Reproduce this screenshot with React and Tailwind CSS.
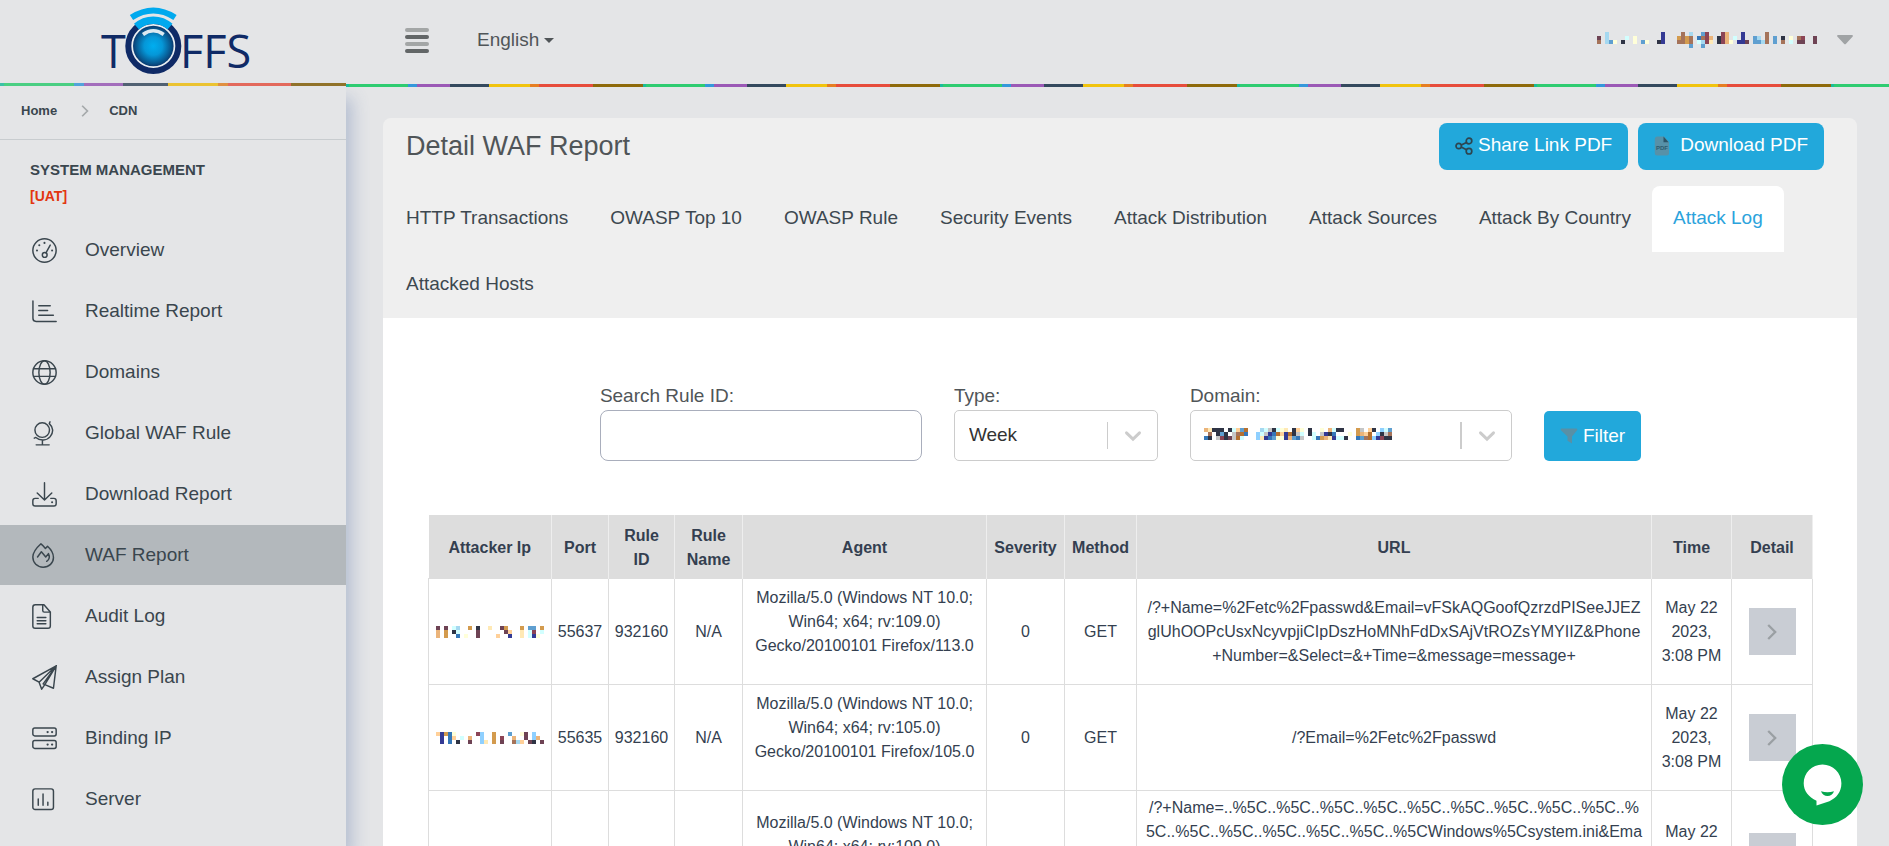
import React from 'react';

const PALETTE = {
  k: '#2f3445',
  n: '#343a94',
  m: '#6e4354',
  r: '#8c4455',
  b: '#a5735a',
  o: '#b5702f',
  t: '#d39b4e',
  p: '#ebb47a',
  s: '#ffd099',
  y: '#ffe9b5',
  w: '#ffffd9',
  c: '#d2ffff',
  l: '#a5d8f0',
  f: '#8fd0ff',
  u: '#5f9fd0',
  e: '#3577b8',
  g: '#c6c6c6',
};

function Mosaic({ rows, label }) {
  const cols = Math.max(...rows.map((row) => row.length));
  return (
    <svg role="img" aria-label={label} width={cols * 4} height={rows.length * 4} shapeRendering="crispEdges" className="block shrink-0">
      {rows.flatMap((row, y) =>
        [...row].map((ch, x) =>
          PALETTE[ch] ? <rect key={`${x}-${y}`} x={x * 4} y={y * 4} width="4" height="4" fill={PALETTE[ch]} /> : null
        )
      )}
    </svg>
  );
}

const USER_ROWS = [
  '  l             n    b l  ur   rp   n     b',
  'm l    c w      n   tbtb ebrp krp c n  ul b u k w br  m',
  'b luw k  w uw  kn   bbtb clry krpw nnm uulb u b c mm  m',
  '                       u  u',
];
const DOMAIN_ROWS = [
  'pykkk kcsuo   lcgkcwy ksw k  w pckk   tg sk fcu',
  ' b kuk gboe  fcgneosnokgc kc gnke   w tpso fkgb',
  'ek grkmgoc   fyneuwwnpueg  cetpyncck  eubofnrkk',
];
const IP_ROWS = [
  ['m m cl  t k  y  mt   t uu t', 'p t kc    m      ms  y cr c', 'p t  e w  m    s  n  y cnw '],
  ['sntew     rf  t   u  wm f', ' n es c p  f  t r  p  m fp', ' n e k  m  fy t m  bls mk m'],
  ['n rw cl t  k  s  mt  t u', 'p t ks  c  m  c  rs y  cr', 'p t  e w   m   s  n  y cn'],
];

function Icon({ children }) {
  return (
    <svg
      viewBox="0 0 24 24"
      className="size-[25px] shrink-0"
      fill="none"
      stroke="currentColor"
      strokeWidth="1.4"
      strokeLinecap="round"
      strokeLinejoin="round"
      aria-hidden="true"
    >
      {children}
    </svg>
  );
}

const GaugeIcon = () => (
  <Icon>
    <circle cx="12" cy="12" r="11.2" />
    <circle cx="12.2" cy="16.3" r="2.3" />
    <path d="M13.4 14.2 17.5 6.8" />
    <g fill="currentColor" stroke="none">
      <circle cx="12" cy="4.7" r="1" />
      <circle cx="7" cy="7" r="1" />
      <circle cx="4.8" cy="12" r="1" />
      <circle cx="19.3" cy="12" r="1" />
    </g>
  </Icon>
);
const ChartIcon = () => (
  <Icon>
    <path d="M.9 2v16.500q0 3 3 3H23.200M6.500 6.500h11M6.500 11h8.500M6.500 15.500h14" />
  </Icon>
);
const GlobeIcon = () => (
  <Icon>
    <circle cx="12" cy="12" r="11.2" />
    <ellipse cx="12" cy="12" rx="5.400" ry="11.2" />
    <path d="M1.500 8.300h21M1.500 15.700h21" />
  </Icon>
);
const StandGlobeIcon = () => (
  <Icon>
    <circle cx="9.800" cy="8.700" r="7" />
    <path d="M17.300.8 16.600 2.500C20.500 6 20.900 11 17.500 15S8 19.500 3.700 15.800L2.200 16.500M10 18.200v4.600M4 22.900h12.500" />
  </Icon>
);
const DownloadIcon = () => (
  <Icon>
    <path d="M12 .8v16M5 10.500l7 6.700 7-6.700M6 15.700H3q-2.200 0-2.200 2.200v3q0 2.200 2.200 2.200h18q2.200 0 2.200-2.200v-3q0-2.200-2.200-2.200h-3" />
    <circle cx="19.300" cy="19.500" r="1" fill="currentColor" stroke="none" />
  </Icon>
);
const FireIcon = () => (
  <Icon>
    <path d="M8.600.8c2 1.500 3.200 3 4.300 4.500l2-2.200c3 2.700 5.700 7 5.700 10.800 0 5.200-4.200 9.300-9.900 9.300S.8 19 .8 13.500C.8 9.500 4.500 4.500 8.600.8Z" />
    <path d="M5.300 13.400 9 8.400l4.200 5 2.600-3.200c1.200 2.500.9 5.700-1.700 7.400" />
  </Icon>
);
const FileIcon = () => (
  <Icon>
    <path d="M3.200.8h8.300l6.100 6.800v13.400q0 2.200-2.200 2.200H3q-2.200 0-2.200-2.200V3Q.8.8 3.200.8ZM10.300.8v5.400q0 1.600 1.600 1.600h5.500M5 13h8.300M5 16h8.300M5 19h8.300" />
  </Icon>
);
const PlaneIcon = () => (
  <Icon>
    <path d="M23.200.8.8 13.200l6 3.300L23.200.8l-2.600 21.500-8.300-3.400L23.200.8 6.800 16.500l2.500 6.700 3-4.300-1.600-.8L23.200.8" />
  </Icon>
);
const ServersIcon = () => (
  <Icon>
    <rect x=".8" y="2" width="22.400" height="7.500" rx="1.800" />
    <rect x=".8" y="14" width="22.400" height="7.500" rx="1.800" />
    <g fill="currentColor" stroke="none">
      <circle cx="15" cy="5.800" r="1.100" />
      <circle cx="19.300" cy="5.800" r="1.100" />
      <circle cx="15" cy="17.800" r="1.100" />
      <circle cx="19.300" cy="17.800" r="1.100" />
    </g>
  </Icon>
);
const BarsIcon = () => (
  <Icon>
    <rect x=".8" y="1.800" width="19.800" height="19.800" rx="2.200" />
    <path d="M6 11.500v6M10.600 6.700v10.800M15.200 14.500v3" />
  </Icon>
);

const NAV = [
  ['Overview', GaugeIcon],
  ['Realtime Report', ChartIcon],
  ['Domains', GlobeIcon],
  ['Global WAF Rule', StandGlobeIcon],
  ['Download Report', DownloadIcon],
  ['WAF Report', FireIcon],
  ['Audit Log', FileIcon],
  ['Assign Plan', PlaneIcon],
  ['Binding IP', ServersIcon],
  ['Server', BarsIcon],
];

const TABS = [
  'HTTP Transactions',
  'OWASP Top 10',
  'OWASP Rule',
  'Security Events',
  'Attack Distribution',
  'Attack Sources',
  'Attack By Country',
  'Attack Log',
  'Attacked Hosts',
];

const ROWS = [
  {
    port: '55637',
    rule: '932160',
    agent: 'Mozilla/5.0 (Windows NT 10.0; Win64; x64; rv:109.0) Gecko/20100101 Firefox/113.0',
    url: [
      '/?+Name=%2Fetc%2Fpasswd&Email=vFSkAQGoofQzrzdPISeeJJEZ',
      'glUhOOPcUsxNcyvpjiCIpDszHoMNhFdDxSAjVtROZsYMYIIZ&Phone',
      '+Number=&Select=&+Time=&message=message+',
    ],
  },
  {
    port: '55635',
    rule: '932160',
    agent: 'Mozilla/5.0 (Windows NT 10.0; Win64; x64; rv:105.0) Gecko/20100101 Firefox/105.0',
    url: ['/?Email=%2Fetc%2Fpasswd'],
  },
  {
    port: '55631',
    rule: '930120',
    agent: 'Mozilla/5.0 (Windows NT 10.0; Win64; x64; rv:109.0) Gecko/20100101 Firefox/113.0',
    url: [
      '/?+Name=..%5C..%5C..%5C..%5C..%5C..%5C..%5C..%5C..%5C..%',
      '5C..%5C..%5C..%5C..%5C..%5C..%5CWindows%5Csystem.ini&Ema',
      'il=vFSkAQGoofQzrzdPISeeJJEZglUhOOPcUsxNcyvpjiCIpDszHo',
      'MNhFdDxSAjVtROZsYMYIIZ&Phone+Number=&Select=&+Time=',
      '&message=message+',
    ],
  },
];

const HEADS = ['Attacker Ip', 'Port', 'Rule ID', 'Rule Name', 'Agent', 'Severity', 'Method', 'URL', 'Time', 'Detail'];

function Logo() {
  return (
    <svg width="160" height="76" viewBox="93 4 160 76" role="img" aria-label="TOFFS" className="block">
      <defs>
        <radialGradient id="orb">
          <stop offset="0" stopColor="#00aef0" />
          <stop offset=".45" stopColor="#0597d8" />
          <stop offset=".85" stopColor="#08578f" />
          <stop offset="1" stopColor="#0a3a70" />
        </radialGradient>
      </defs>
      <g fill="#0f2a66" fontFamily="'Open Sans', 'Noto Sans', sans-serif" fontSize="45" fontWeight="500">
        <text x="101" y="68">
          T
        </text>
        <text x="180" y="68">
          FFS
        </text>
      </g>
      <circle cx="153.300" cy="46" r="25" fill="#e9eef2" stroke="#0f2a66" strokeWidth="6" />
      <path d="M136.500 26.600A25 25 0 0 1 170 26.600" fill="none" stroke="#00a9ee" strokeWidth="7.500" />
      <path d="M131.500 17.500Q153.300 3.500 175 17.500" fill="none" stroke="#00a9ee" strokeWidth="6" />
      <circle cx="153.300" cy="46" r="20.300" fill="url(#orb)" />
      <path d="M143 34.500Q153.300 27 163.700 34.500" fill="none" stroke="#dbe9f1" strokeWidth="3.600" />
    </svg>
  );
}

function Chevron({ className }) {
  return (
    <svg viewBox="0 0 16 16" className={className} fill="none" stroke="currentColor" strokeWidth="2.600" strokeLinecap="round" aria-hidden="true">
      <path d="M2.200 5.200 8 10.800l5.800-5.600" />
    </svg>
  );
}

function ArrowRight({ className }) {
  return (
    <svg viewBox="0 0 10 16" className={className} fill="none" stroke="currentColor" strokeWidth="2.300" aria-hidden="true">
      <path d="m1.200 1 7 7-7 7" />
    </svg>
  );
}

function SelectBox({ id, label, width, children, overlay, bar }) {
  return (
    <div className={width}>
      <label htmlFor={id} className="block h-7 leading-7">
        {label}
      </label>
      <div className="relative">
        <select
          id={id}
          className="block h-[51px] w-full appearance-none rounded-[5px] border border-[#cccccc] bg-white pr-14 pl-[14px] text-[19px] text-[#333333]"
        >
          {children}
        </select>
        {overlay}
        <div className="pointer-events-none absolute inset-y-0 right-4 flex items-center gap-4 text-[#cccccc]">
          <span className={`h-[27px] bg-[#cccccc] ${bar}`} />
          <Chevron className="size-[18px]" />
        </div>
      </div>
    </div>
  );
}

export default function App() {
  return (
    <div className="flex h-screen overflow-hidden bg-[#e4e5e7] font-['Liberation_Sans',Arial,sans-serif] text-[19px] text-[#505558]">
      <aside className="relative z-10 flex w-[346px] shrink-0 flex-col text-[#3a464e]">
        <a href="#home" className="flex h-[83px] shrink-0 justify-center pt-1">
          <Logo />
        </a>
        <div className="h-[3px] shrink-0 bg-[linear-gradient(90deg,#3cc3a8_0_4px,#4bd183_4px_74px,#53a5dd_74px_84px,#a56ebd_84px_123px,#526273_123px_168px,#eec530_168px_218px,#e39140_218px_228px,#e66a5c_228px_291px,#927328_291px_346px)]" />
        <div className="grow bg-[#e4e5e7] shadow-[6px_12px_16px_rgba(69,101,160,0.3)]">
          <nav aria-label="Breadcrumb" className="flex h-[54px] items-center border-b border-[#c8cccf] pb-1 pl-[21px] text-[13px] font-bold">
            <a href="#home">Home</a>
            <ArrowRight className="mr-5 ml-6 h-3 w-2 text-[#a5a9ab]" />
            <a href="#cdn">CDN</a>
          </nav>
          <div className="px-[30px] pt-4 leading-[27px] font-bold">
            <h2 className="text-[15px]">SYSTEM MANAGEMENT</h2>
            <p className="text-[14px] text-[#e2360f]">[UAT]</p>
          </div>
          <ul className="mt-[10px] flex flex-col gap-px">
            {NAV.map(([name, Glyph]) => (
              <li key={name}>
                <a
                  href={`#${name}`}
                  aria-current={name === 'WAF Report' ? 'page' : undefined}
                  className={`flex h-[60px] items-center gap-7 pl-8 ${name === 'WAF Report' ? 'bg-[#b3b8bc]' : ''}`}
                >
                  <Glyph />
                  {name}
                </a>
              </li>
            ))}
          </ul>
        </div>
      </aside>

      <div className="min-w-0 flex-1">
        <header className="relative z-20 bg-[#e4e5e7]">
          <div className="flex h-[84px] items-center pr-9 pb-1 pl-[59px]">
            <button type="button" aria-label="Toggle menu" className="flex w-6 flex-col gap-[3px]">
              <span className="h-1 w-full rounded-full bg-[#a3a6a6]" />
              <span className="h-1 w-full rounded-full bg-[#626667]" />
              <span className="h-1 w-full rounded-full bg-[#a3a6a6]" />
              <span className="h-1 w-full rounded-full bg-[#626667]" />
            </button>
            <button type="button" className="ml-12 flex items-center gap-[5px]">
              English
              <svg viewBox="0 0 10 5" className="h-[5px] w-[10px]" fill="currentColor" aria-hidden="true">
                <path d="M0 0h10L5 5Z" />
              </svg>
            </button>
            <button type="button" className="ml-auto flex items-center gap-5" aria-label="Account menu">
              <Mosaic rows={USER_ROWS} label="Account name" />
              <svg viewBox="0 0 16 10" className="h-[10px] w-4 text-[#a0a3a5]" fill="currentColor" aria-hidden="true">
                <path d="M1.200 0h13.600c1 0 1.400 1 .7 1.700L9 8.800q-1 1-2 0L.5 1.700C-.2 1 .2 0 1.200 0Z" />
              </svg>
            </button>
          </div>
          <div className="h-[3px] bg-[repeating-linear-gradient(90deg,#1abc9c_0_3px,#2ecc71_3px_62px,#3498db_62px_71px,#9b59b6_71px_104px,#34495e_104px_143px,#f1c40f_143px_184px,#e67e22_184px_193px,#e74c3c_193px_247px,#8e6a0a_247px_297px)]" />
        </header>

        <main className="mt-[31px] mr-8 ml-[37px] rounded-t-lg bg-[#efefef]">
          <div className="flex items-center justify-between pt-[5px] pr-[33px] pb-4 pl-[23px]">
            <h1 className="text-[27px]">Detail WAF Report</h1>
            <div className="flex gap-[10px] text-white">
              <button type="button" className="flex h-[47px] items-center gap-[5px] rounded-lg bg-[#22a8db] px-4 pb-0.5">
                <svg viewBox="0 0 18 18" className="size-[18px] text-[#2d4550]" fill="none" stroke="currentColor" strokeWidth="1.700" aria-hidden="true">
                  <circle cx="3.700" cy="9" r="2.700" />
                  <circle cx="14" cy="4" r="2.800" />
                  <circle cx="14" cy="14.200" r="2.800" />
                  <path d="m6.200 8 5.300-2.600M6.200 10l5.300 2.800" />
                </svg>
                Share Link PDF
              </button>
              <button type="button" className="flex h-[47px] items-center gap-[10px] rounded-lg bg-[#22a8db] px-4 pb-0.5">
                <svg viewBox="0 0 16 20" className="h-5 w-4" aria-hidden="true">
                  <path d="M3 .5h7l5 5.500v11q0 2.500-2.500 2.500H3Q.8 19.500.8 17V3Q.8.5 3 .5Z" fill="#5791a8" />
                  <path d="m9.500.5 5 5.700h-5Z" fill="#2b5467" />
                  <text x="8" y="14" textAnchor="middle" fontSize="6" fontWeight="700" fill="#2c5b6f">
                    PDF
                  </text>
                </svg>
                Download PDF
              </button>
            </div>
          </div>

          <nav aria-label="Report sections" className="flex flex-wrap pl-0.5 text-[#3d4850]">
            {TABS.map((tab) => (
              <a
                key={tab}
                href={`#${tab}`}
                aria-current={tab === 'Attack Log' ? 'page' : undefined}
                className={`flex h-[66px] items-center px-[21px] pb-0.5 ${tab === 'Attack Log' ? 'rounded-t-lg bg-white text-[#2ba3dc]' : ''}`}
              >
                {tab}
              </a>
            ))}
          </nav>

          <div className="bg-white pt-16 pr-[44px] pl-[45px]">
            <form className="flex items-end justify-center gap-8" onSubmit={(e) => e.preventDefault()}>
              <div className="w-[322px]">
                <label htmlFor="rule-id" className="block h-7 leading-7">
                  Search Rule ID:
                </label>
                <input id="rule-id" type="text" className="block h-[51px] w-full rounded-lg border border-[#a9aebc] bg-white px-3" />
              </div>
              <SelectBox id="type" label="Type:" width="w-[204px]" bar="w-px">
                <option>Week</option>
              </SelectBox>
              <SelectBox
                id="domain"
                label="Domain:"
                width="w-[322px]"
                bar="w-0.5"
                overlay={
                  <div className="pointer-events-none absolute inset-y-0 left-[14px] flex items-center pb-1">
                    <Mosaic rows={DOMAIN_ROWS} label="Selected domain" />
                  </div>
                }
              >
                <option value="" aria-label="Selected domain" />
              </SelectBox>
              <button type="submit" className="flex h-[50px] items-center gap-[5px] rounded-[5px] bg-[#22a8db] px-4 text-white">
                <svg viewBox="0 0 18 16" className="h-4 w-[18px]" fill="#5990a6" aria-hidden="true">
                  <path d="M1.300.5h15.400q1.200.8.4 1.800L12 8.500v7l-4.500-2.700V8.500L.9 2.300Q.2 1.200 1.300.5Z" />
                </svg>
                Filter
              </button>
            </form>

            <table className="mt-[54px] w-full table-fixed border-collapse text-center text-[16px] leading-6 text-[#343f50]">
              <colgroup>
                <col className="w-[123px]" />
                <col className="w-[57px]" />
                <col className="w-[66px]" />
                <col className="w-[68px]" />
                <col className="w-[244px]" />
                <col className="w-[78px]" />
                <col className="w-[72px]" />
                <col />
                <col className="w-[80px]" />
                <col className="w-[81px]" />
              </colgroup>
              <thead>
                <tr className="bg-[#dddddd]">
                  {HEADS.map((head) => (
                    <th key={head} scope="col" className="border-r border-[#eeeeee] px-[6px] pt-[9px] pb-[6px] font-bold">
                      {head}
                    </th>
                  ))}
                </tr>
              </thead>
              <tbody>
                {ROWS.map((row, i) => (
                  <tr key={row.port}>
                    <td className="border border-[#dddddd] p-0">
                      <div className="flex justify-center">
                        <Mosaic rows={IP_ROWS[i]} label="Attacker address" />
                      </div>
                    </td>
                    <td className="border border-[#dddddd] px-1">{row.port}</td>
                    <td className="border border-[#dddddd] px-1">{row.rule}</td>
                    <td className="border border-[#dddddd] px-1">N/A</td>
                    <td className="border border-[#dddddd] px-[6px] py-[7px]">
                      <p className="mb-[19px]">{row.agent}</p>
                    </td>
                    <td className="border border-[#dddddd] px-[6px]">0</td>
                    <td className="border border-[#dddddd] px-[6px]">GET</td>
                    <td className="border border-[#dddddd] px-[6px] py-[5px] whitespace-pre-line">{row.url.join('\n')}</td>
                    <td className="border border-[#dddddd] px-[6px]">May 22 2023, 3:08 PM</td>
                    <td className="border border-[#dddddd] px-[6px]">
                      <button type="button" aria-label="Show detail" className="inline-flex size-[47px] items-center justify-center bg-[#c9cdd4] align-middle">
                        <ArrowRight className="h-4 w-[10px] text-[#9a9fa3]" />
                      </button>
                    </td>
                  </tr>
                ))}
              </tbody>
            </table>
          </div>
        </main>
      </div>

      <button type="button" aria-label="Open chat" className="fixed right-[26px] bottom-[21px] z-30 size-[81px] rounded-full bg-[#05a74e]">
        <svg viewBox="0 0 81 81" className="size-[81px]" aria-hidden="true">
          <path d="M40.500 20.500c10.500 0 18.900 8.300 18.900 18.800 0 9-5 14.500-12 18L34.500 61.500v-4.800C26.500 53 21.700 47 21.700 39.300c0-10.500 8.300-18.800 18.800-18.800Z" fill="#fff" />
          <path d="M39 47.300q6.500 1.700 13 0c-1 3-3.500 4.700-6.500 4.700S40 50.300 39 47.300Z" fill="#05a74e" />
        </svg>
      </button>
    </div>
  );
}
